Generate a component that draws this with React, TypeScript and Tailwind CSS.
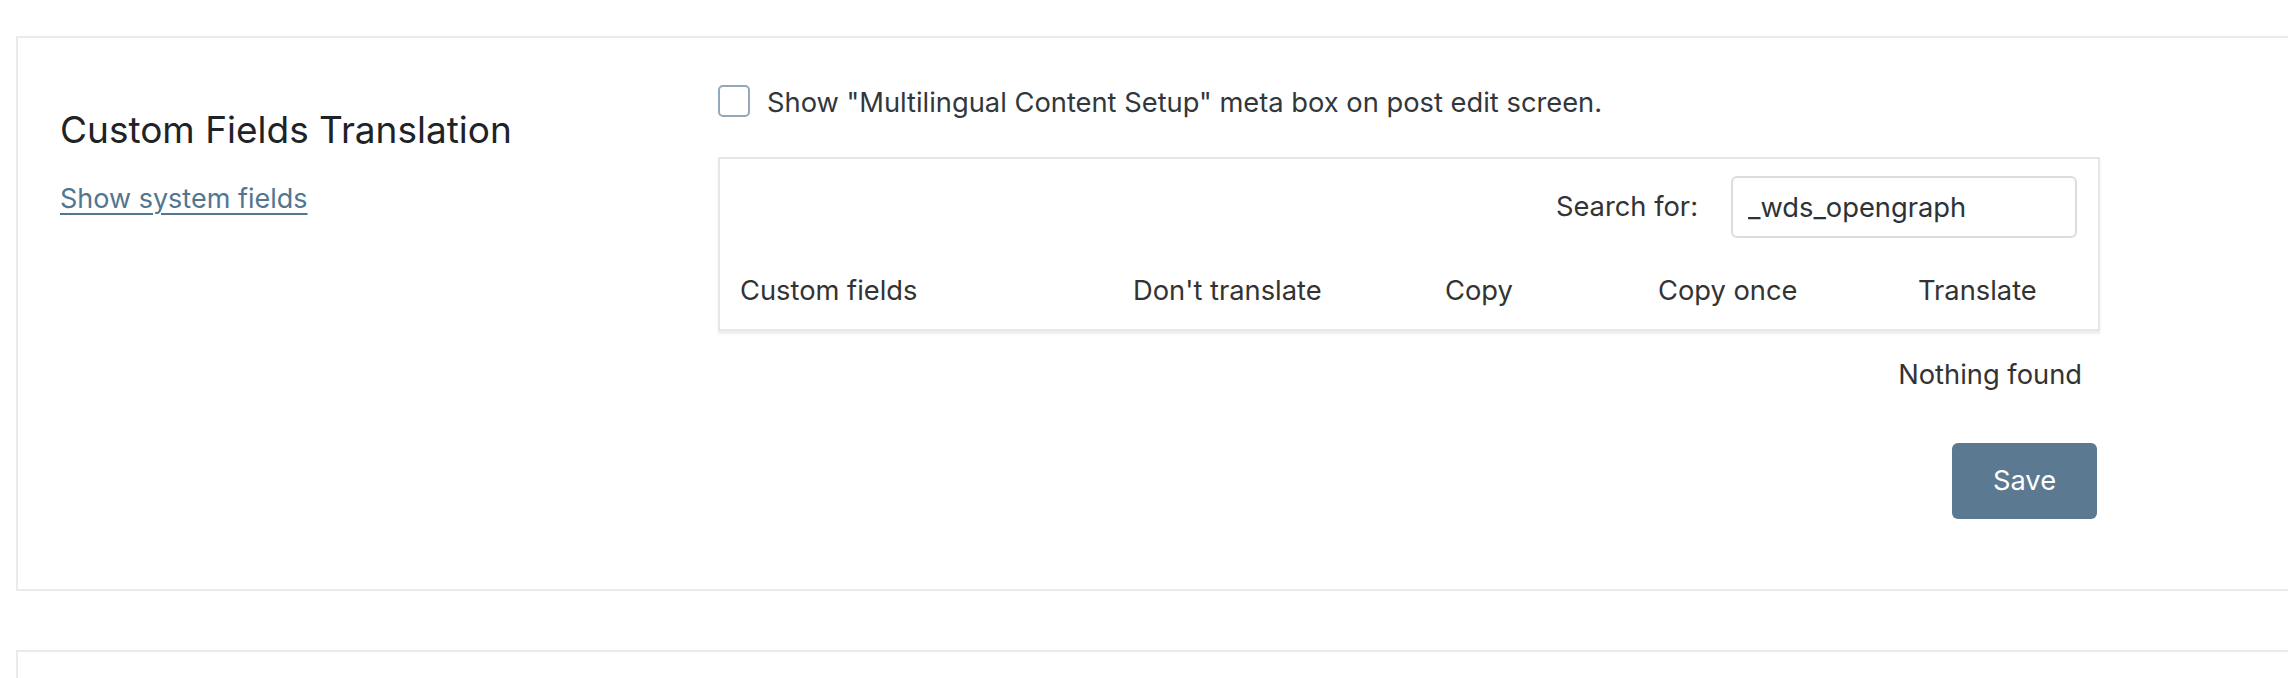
import React from "react";

const columns = [
  { label: "Custom fields", width: "w-[393px]" },
  { label: "Don't translate", width: "w-[312px]" },
  { label: "Copy", width: "w-[213px]" },
  { label: "Copy once", width: "w-[260px]" },
  { label: "Translate", width: "flex-1" },
];

export default function App() {
  return (
    <div className="min-h-[678px] bg-white pt-[36px] pl-[16px] font-['Inter','Liberation_Sans',sans-serif] text-[#32373c]">
      {/* settings card */}
      <div className="flex border-2 border-r-0 border-[#ebebeb] pl-[42px] pb-[70px]">
        <div className="w-[658px] shrink-0 pt-[70px]">
          <h2 className="text-[37px] leading-[44px] text-[#1d2327]">Custom Fields Translation</h2>
          <a
            href="#"
            className="mt-[31px] inline-block text-[27px] leading-[32px] text-[#52768f] underline decoration-2 underline-offset-[5px]"
          >
            Show system fields
          </a>
        </div>

        <div className="w-[1382px] shrink-0 pt-[47px]">
          <label className="flex items-start gap-[17px]">
            <span className="block h-[32px] w-[32px] rounded-[5px] border-2 border-[#93a8ba] bg-white" />
            <span className="mt-[2px] text-[27.3px] leading-[32px]">
              Show "Multilingual Content Setup" meta box on post edit screen.
            </span>
          </label>

          <div className="mt-[38px] border-2 border-[#e6e6e6] pt-[17px] pb-[22px] shadow-[0_3px_2px_rgba(0,0,0,0.07)]">
            <div className="flex items-center justify-end gap-[33px] pr-[21px]">
              <span className="text-[27.3px] leading-[32px] text-[#333]">Search for:</span>
              <input
                readOnly
                value="_wds_opengraph"
                className="h-[62px] w-[346px] rounded-[6px] border-2 border-[#dcdcde] bg-white px-[15px] text-[27.3px] text-[#2c3338] outline-none"
              />
            </div>
            <div className="mt-[37px] flex pl-[20px] text-[27.3px] leading-[32px] text-[#333]">
              {columns.map((c) => (
                <div key={c.label} className={c.width}>
                  {c.label}
                </div>
              ))}
            </div>
          </div>

          <div className="mt-[28px] pr-[18px] text-right text-[27.3px] leading-[32px] text-[#333]">Nothing found</div>

          <div className="mt-[52px] flex justify-end pr-[3px]">
            <button className="flex h-[76px] w-[145px] items-center justify-center rounded-[6px] bg-[#5b7a91] text-[27.3px] text-white">
              Save
            </button>
          </div>
        </div>
      </div>

      {/* next card, cut off by the window */}
      <div className="mt-[59px] h-[120px] border-2 border-r-0 border-b-0 border-[#ebebeb]" />
    </div>
  );
}
